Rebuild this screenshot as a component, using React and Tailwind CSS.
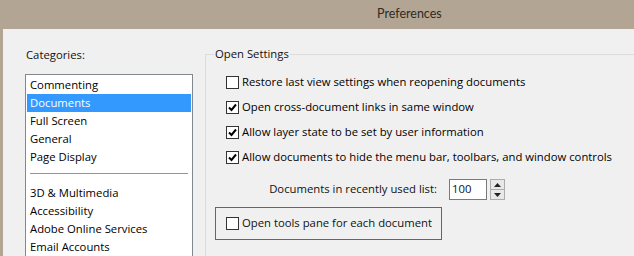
const FONT = { fontFamily: '"Open Sans", "Noto Sans", sans-serif' };

function Check({ checked }) {
  return (
    <div className="w-[13px] h-[13px] shrink-0 border border-[#333] bg-white flex items-center justify-center">
      {checked && (
        <svg width="11" height="11" viewBox="0 0 11 11">
          <path d="M2 5.5 L4.5 8 L9 2.5" fill="none" stroke="#000" strokeWidth="2" />
        </svg>
      )}
    </div>
  );
}

function Row({ checked, children }) {
  return (
    <div className="h-[25px] flex items-center pl-[20px]">
      <Check checked={checked} />
      <span className="ml-[3px] whitespace-nowrap text-[#000]">{children}</span>
    </div>
  );
}

const top = ["Commenting", "Documents", "Full Screen", "General", "Page Display"];
const bottom = ["3D & Multimedia", "Accessibility", "Adobe Online Services", "Email Accounts"];

export default function App() {
  return (
    <div className="w-[634px] h-[256px] overflow-hidden bg-[#b2a593] flex flex-col text-[11.3px] text-[#111]" style={FONT}>
      <div className="h-[29px] shrink-0 flex items-center pl-[377px] text-[12.5px] text-[#2e2a26] font-['Lato',sans-serif]">Preferences</div>
      <div className="flex-1 ml-[3px] bg-[#f0f0f0] flex">
        {/* categories */}
        <div className="w-[202px] shrink-0 pl-[22px]">
          <div className="mt-[18px] h-[16px] leading-[16px] pl-[1px]">Categories:</div>
          <div className="mt-[11px] w-[168px] h-[200px] border border-[#828790] bg-white p-[1px]">
            {top.map(t => (
              <div key={t} className={`h-[18px] leading-[18px] pl-[3px] ${t === "Documents" ? "bg-[#3399ff] text-white" : "text-black"}`}>{t}</div>
            ))}
            <div className="h-[18px] pt-[7px] px-[3px]"><div className="h-px bg-[#6d9fc4]" /></div>
            {bottom.map(t => (
              <div key={t} className="h-[18px] leading-[18px] pl-[3px] text-black">{t}</div>
            ))}
          </div>
        </div>
        {/* open settings group */}
        <div className="flex-1 mt-[25px] border-l border-t border-[#dcdcdc] relative">
          <div className="absolute -top-[9px] left-[8px] bg-[#f0f0f0] px-[1px] leading-[16px]">Open Settings</div>
          <div className="pt-[15px]">
            <Row>Restore last view settings when reopening documents</Row>
            <Row checked>Open cross-document links in same window</Row>
            <Row checked>Allow layer state to be set by user information</Row>
            <Row checked>Allow documents to hide the menu bar, toolbars, and window controls</Row>
            <div className="mt-[9px] h-[21px] flex items-center">
              <span className="w-[231px] text-right whitespace-nowrap">Documents in recently used list:</span>
              <div className="ml-[12px] w-[38px] h-[21px] border border-[#7a7a7a] bg-white pl-[2px] leading-[18px]">100</div>
              <div className="ml-[3px] w-[15px] h-[21px] border border-[#acacac] bg-[#e8e8e8] flex flex-col">
                <div className="flex-1 flex items-center justify-center border-b border-[#acacac]">
                  <svg width="7" height="4" viewBox="0 0 7 4"><path d="M0 4 L3.5 0 L7 4Z" fill="#222" /></svg>
                </div>
                <div className="flex-1 flex items-center justify-center">
                  <svg width="7" height="4" viewBox="0 0 7 4"><path d="M0 0 L3.5 4 L7 0Z" fill="#222" /></svg>
                </div>
              </div>
            </div>
            <div className="mt-[7px] ml-[9px] w-[227px] h-[33px] border border-[#d9343e] flex items-center pl-[10px]">
              <Check />
              <span className="ml-[3px] whitespace-nowrap">Open tools pane for each document</span>
            </div>
          </div>
        </div>
      </div>
    </div>
  );
}
